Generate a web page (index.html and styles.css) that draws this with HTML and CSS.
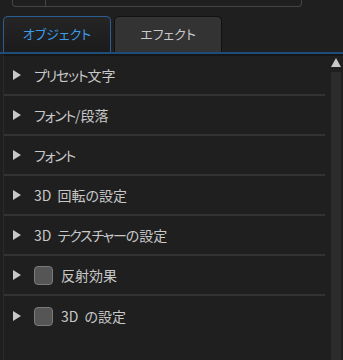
FILE: index.html
```html
<!DOCTYPE html>
<html lang="ja">
<head>
<meta charset="utf-8">
<link rel="stylesheet" href="styles.css">
</head>
<body>
<div class="top"><div class="top-cell"></div><div class="top-cell grow"></div></div>
<div class="tabs">
  <div class="tab active">オブジェクト</div>
  <div class="tab">エフェクト</div>
</div>
<div class="panel">
  <div class="list">
    <div class="row"><span class="tri"></span><span class="label"><span class="kana">プリセット</span>文字</span></div>
    <div class="row"><span class="tri"></span><span class="label"><span class="kana">フォント</span>/段落</span></div>
    <div class="row"><span class="tri"></span><span class="label"><span class="kana">フォント</span></span></div>
    <div class="row"><span class="tri"></span><span class="label">3D 回転の設定</span></div>
    <div class="row"><span class="tri"></span><span class="label">3D <span class="kana">テクスチャー</span>の設定</span></div>
    <div class="row"><span class="tri"></span><span class="check"></span><span class="label">反射効果</span></div>
    <div class="row"><span class="tri"></span><span class="check"></span><span class="label">3D の設定</span></div>
  </div>
  <div class="scroll">
    <div class="arrow"></div>
    <div class="track"></div>
  </div>
</div>
</body>
</html>
```
FILE: styles.css
```css
html, body {
  margin: 0;
  padding: 0;
  background: #1f1f1f;
  width: 343px;
  height: 360px;
  overflow: hidden;
  font-family: "Noto Sans CJK JP", "Noto Sans", sans-serif;
  font-feature-settings: "palt";
}
.top {
  display: flex;
  height: 6px;
  margin: 0 41px 0 12px;
  border: 1px solid #454545;
  border-top: none;
  border-radius: 0 0 4px 4px;
}
.top-cell {
  width: 32px;
  border-right: 1px solid #454545;
}
.top-cell.grow { flex: 1; border-right: none; }
.tabs {
  display: flex;
  gap: 3px;
  margin-top: 9px;
  padding-left: 3px;
  height: 36px;
  border-bottom: 2px solid #1f4d7a;
  align-items: flex-end;
}
.tab {
  box-sizing: border-box;
  width: 108px;
  height: 36px;
  border: 1px solid #111;
  border-bottom: none;
  border-radius: 5px 5px 0 0;
  background: #333;
  color: #c8c8c8;
  font-size: 13px;
  display: flex;
  align-items: center;
  justify-content: center;
  padding-bottom: 2px;
}
.tab.active {
  background: linear-gradient(#252525, #1b1b1b);
  border-color: #2b5f94;
  color: #3d9be9;
}
.panel {
  display: flex;
  height: 310px;
  border-top: 2px solid #161616;
  border-left: 1px solid #2a2a2a;
  margin-left: 3px;
}
.list {
  width: 321px;
}
.row {
  box-sizing: border-box;
  height: 40px;
  display: flex;
  align-items: center;
  padding-left: 9px;
  border-bottom: 2px solid #333;
  color: #c8c8c8;
  font-size: 14px;
}
.row:last-child { border-bottom: none; }
.label { word-spacing: 3px; white-space: pre; }
.kana { letter-spacing: -1.2px; }
.tri {
  width: 0;
  height: 0;
  border-top: 5px solid transparent;
  border-bottom: 5px solid transparent;
  border-left: 8px solid #c8c8c8;
  margin-right: 13px;
}
.check {
  box-sizing: border-box;
  width: 19px;
  height: 19px;
  border: 1px solid #7a7a7a;
  border-radius: 4px;
  background: #555;
  margin-right: 8px;
}
.scroll {
  width: 11px;
  margin-left: 5px;
  display: flex;
  flex-direction: column;
  align-items: center;
}
.arrow {
  margin-top: 2px;
  width: 0;
  height: 0;
  border-left: 5px solid transparent;
  border-right: 5px solid transparent;
  border-bottom: 9px solid #c8c8c8;
}
.track {
  margin-top: 5px;
  width: 10px;
  flex: 1;
  background: #2c2c2c;
}
```
